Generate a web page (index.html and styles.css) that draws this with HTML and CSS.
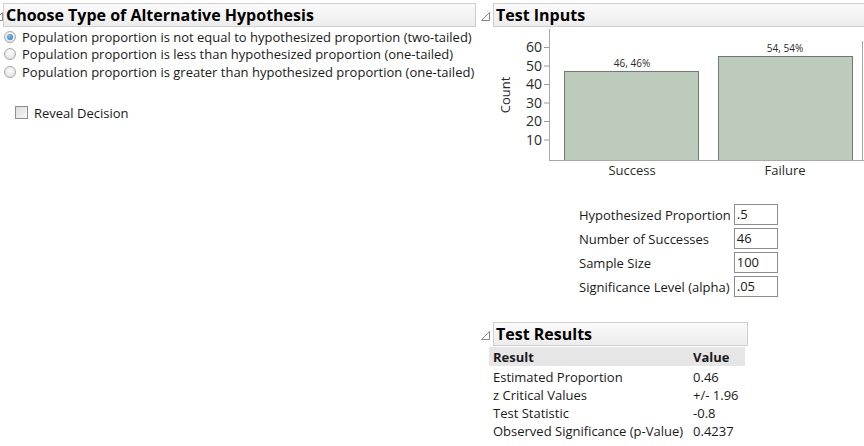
FILE: index.html
```html
<!DOCTYPE html>
<html lang="en">
<head>
    <meta charset="UTF-8">
    <title>One Sample Proportion Test</title>
    <link rel="stylesheet" href="styles.css">
</head>
<body>
    <div class="page">
        <div class="left">
            <div class="outline">
                <svg class="tri tri-cut" width="9" height="9" viewBox="0 0 9 9"><path d="M0.5 8.5 L8.5 0.5 L8.5 8.5 Z"/></svg>
                <div class="hdr">Choose Type of Alternative Hypothesis</div>
            </div>

            <div class="radios">
                <label class="radio"><span class="dot on"></span>Population proportion is not equal to hypothesized proportion (two-tailed)</label>
                <label class="radio"><span class="dot"></span>Population proportion is less than hypothesized proportion (one-tailed)</label>
                <label class="radio"><span class="dot"></span>Population proportion is greater than hypothesized proportion (one-tailed)</label>
            </div>

            <label class="check"><span class="box"></span>Reveal Decision</label>
        </div>

        <div class="right">
            <div class="outline">
                <svg class="tri" width="9" height="9" viewBox="0 0 9 9"><path d="M0.5 8.5 L8.5 0.5 L8.5 8.5 Z"/></svg>
                <div class="hdr hdr-wide">Test Inputs</div>
            </div>

            <svg class="chart" width="388" height="160" viewBox="0 0 388 160">
                <g class="ticks">
                    <line x1="68" y1="18.5" x2="73" y2="18.5"/>
                    <line x1="68" y1="37" x2="73" y2="37"/>
                    <line x1="68" y1="55.5" x2="73" y2="55.5"/>
                    <line x1="68" y1="74" x2="73" y2="74"/>
                    <line x1="68" y1="92.5" x2="73" y2="92.5"/>
                    <line x1="68" y1="111" x2="73" y2="111"/>
                </g>
                <g class="tick-labels">
                    <text x="66" y="23">60</text>
                    <text x="66" y="41.5">50</text>
                    <text x="66" y="60">40</text>
                    <text x="66" y="78.5">30</text>
                    <text x="66" y="97">20</text>
                    <text x="66" y="115.5">10</text>
                </g>
                <text class="axis-title" transform="translate(34 66) rotate(-90)">Count</text>

                <rect class="bar" x="88.5" y="42.5" width="134" height="89"/>
                <rect class="bar" x="242.5" y="27.5" width="134" height="104"/>
                <text class="bar-label" x="156" y="38">46, 46%</text>
                <text class="bar-label" x="309" y="23">54, 54%</text>

                <line class="axis" x1="73.5" y1="0" x2="73.5" y2="132"/>
                <line class="axis" x1="73" y1="131.5" x2="388" y2="131.5"/>
                <line class="axis" x1="386.5" y1="12" x2="386.5" y2="132"/>

                <text class="cat" x="156" y="146">Success</text>
                <text class="cat" x="309" y="146">Failure</text>
            </svg>

            <table class="inputs">
                <tr><td>Hypothesized Proportion</td><td><span class="field">.5</span></td></tr>
                <tr><td>Number of Successes</td><td><span class="field">46</span></td></tr>
                <tr><td>Sample Size</td><td><span class="field">100</span></td></tr>
                <tr><td>Significance Level (alpha)</td><td><span class="field">.05</span></td></tr>
            </table>

            <div class="outline results-outline">
                <svg class="tri" width="9" height="9" viewBox="0 0 9 9"><path d="M0.5 8.5 L8.5 0.5 L8.5 8.5 Z"/></svg>
                <div class="hdr hdr-results">Test Results</div>
            </div>

            <table class="results">
                <tr class="head"><th>Result</th><th>Value</th></tr>
                <tr class="first"><td>Estimated Proportion</td><td>0.46</td></tr>
                <tr><td>z Critical Values</td><td>+/- 1.96</td></tr>
                <tr><td>Test Statistic</td><td>-0.8</td></tr>
                <tr><td>Observed Significance (p-Value)</td><td>0.4237</td></tr>
            </table>
        </div>
    </div>
</body>
</html>
```

FILE: styles.css
```css
body {
    margin: 0;
    font-family: "Open Sans", "Noto Sans", sans-serif;
    font-size: 13px;
    color: #1a1a1a;
    background: #fff;
}

.page {
    display: flex;
    padding-top: 3px;
}

.left {
    width: 476px;
    flex: none;
}

.right {
    flex: 1;
}

.outline {
    display: flex;
    align-items: center;
}

.tri {
    flex: none;
    margin: 2px 3px 0 5px;
}

.tri path {
    fill: #fff;
    stroke: #8a8a8a;
    stroke-width: 1;
}

.tri-cut {
    margin-left: -6px;
    margin-right: 0;
}

.hdr {
    flex: 1;
    height: 22px;
    line-height: 22px;
    padding-left: 2px;
    font-size: 16px;
    font-weight: bold;
    color: #000;
    border: 1px solid #cfcfcf;
    background: linear-gradient(#fafafa, #ececec);
    white-space: nowrap;
}

.hdr-wide {
    border-right: none;
}

.radios {
    padding: 1px 0 0 4px;
}

.radio {
    display: flex;
    align-items: center;
    height: 17.5px;
}

.dot {
    width: 10px;
    height: 10px;
    border-radius: 50%;
    border: 1px solid #a8a8a8;
    background: radial-gradient(circle at 50% 35%, #fdfdfd, #dcdcdc);
    margin-right: 6px;
    flex: none;
    position: relative;
}

.dot.on::after {
    content: "";
    position: absolute;
    left: 2px;
    top: 2px;
    width: 6px;
    height: 6px;
    border-radius: 50%;
    background: radial-gradient(circle at 40% 35%, #7cc2ef, #1f74b8);
}

.check {
    display: flex;
    align-items: center;
    margin: 23px 0 0 15px;
}

.box {
    width: 11px;
    height: 11px;
    border: 1px solid #8e8e8e;
    background: linear-gradient(135deg, #dcdcdc, #f7f7f7);
    margin-right: 6px;
}

.chart {
    display: block;
    margin-top: 2px;
}

.chart text {
    font-family: "Open Sans", "Noto Sans", sans-serif;
    fill: #2a2a2a;
}

.ticks line {
    stroke: #9a9a9a;
}

.tick-labels text {
    font-size: 14px;
    text-anchor: end;
}

.axis-title {
    font-size: 13px;
    text-anchor: middle;
}

.axis {
    stroke: #a8a8a8;
    stroke-width: 1;
}

.bar {
    fill: #bccbbb;
    stroke: #6f7b6e;
    stroke-width: 1;
}

.bar-label {
    font-size: 10px;
    text-anchor: middle;
}

.cat {
    font-size: 13px;
    text-anchor: middle;
}

.inputs {
    border-collapse: collapse;
    margin: 15px 0 0 103px;
}

.inputs td {
    padding: 0 0 3px 0;
    height: 21px;
    white-space: nowrap;
}

.inputs td:first-child {
    padding-right: 3px;
}

.field {
    display: block;
    width: 40px;
    height: 19px;
    line-height: 19px;
    padding-left: 2px;
    border: 1px solid #8c8c8c;
}

.results-outline {
    margin-top: 22px;
}

.hdr-results {
    flex: none;
    width: 251px;
}

.results {
    border-collapse: collapse;
    margin: 1px 0 0 13px;
}

.results th,
.results td {
    text-align: left;
    padding: 0 0 0 4px;
    height: 18px;
    white-space: nowrap;
}

.results th {
    font-weight: bold;
    background: #e6e6e6;
    height: 19px;
}

.results th:last-child {
    width: 52px;
}

.results td:first-child,
.results th:first-child {
    padding-right: 6px;
}

.results .first td {
    padding-top: 2px;
}
```
